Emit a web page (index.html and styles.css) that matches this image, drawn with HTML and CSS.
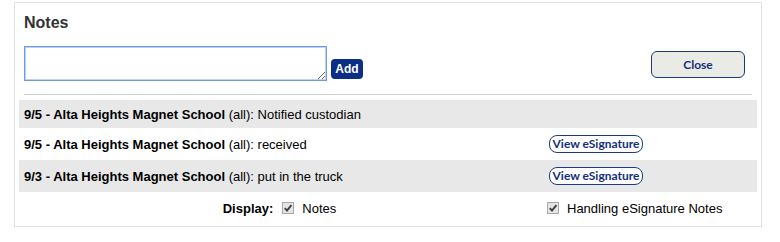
FILE: index.html
```html
<!DOCTYPE html>
<html>
	<head>
		<meta charset="UTF-8">
		<title>Notes</title>
		<link rel="stylesheet" href="styles.css">
	</head>
	<body>
		<div class="panel">
			<h2 class="title">Notes</h2>
			<div class="compose">
				<textarea class="noteInput"></textarea>
				<a href="#" class="addBtn">Add</a>
				<a href="#" class="closeBtn">Close</a>
			</div>
			<div class="rule"></div>
			<div class="notes">
				<div class="row odd">
					<div class="cell"><b>9/5 - Alta Heights Magnet School</b> (all):&nbsp;Notified custodian</div>
					<div class="cell"></div>
				</div>
				<div class="row tall">
					<div class="cell"><b>9/5 - Alta Heights Magnet School</b> (all): received</div>
					<div class="cell"><a href="#" class="sigBtn">View eSignature</a></div>
				</div>
				<div class="row odd tall">
					<div class="cell"><b>9/3 - Alta Heights Magnet School</b> (all): put in the truck</div>
					<div class="cell"><a href="#" class="sigBtn">View eSignature</a></div>
				</div>
				<div class="row display">
					<div class="cell left">
						<b>Display:</b>
						<span class="ck"><svg width="12" height="12" viewBox="0 0 12 12"><rect x="0.5" y="0.5" width="11" height="11" fill="#e4e4e4" stroke="#a9a9a9"/><path d="M2.8 6.2 L5 8.6 L9.4 3.2" fill="none" stroke="#3c3c3c" stroke-width="1.9"/></svg></span>
						<span>Notes</span>
					</div>
					<div class="cell right">
						<span class="ck"><svg width="12" height="12" viewBox="0 0 12 12"><rect x="0.5" y="0.5" width="11" height="11" fill="#e4e4e4" stroke="#a9a9a9"/><path d="M2.8 6.2 L5 8.6 L9.4 3.2" fill="none" stroke="#3c3c3c" stroke-width="1.9"/></svg></span>
						<span>Handling eSignature Notes</span>
					</div>
				</div>
			</div>
		</div>
	</body>
</html>
```

FILE: styles.css
```css
*{
	margin: 0;
	padding: 0;
	box-sizing: border-box;
}
body{
	background: #fff;
	font-family: Arial, "Liberation Sans", sans-serif;
	font-size: 13px;
	color: #000;
}
.panel{
	width: 748px;
	height: 225px;
	margin: 2px 0 0 14px;
	border: 1px solid #e2e2e2;
	padding: 0 4px;
}
.title{
	font-size: 16px;
	line-height: 18px;
	color: #333;
	margin: 11px 0 0 5px;
}
.compose{
	display: flex;
	align-items: flex-start;
	margin: 14px 12px 0 5px;
}
.noteInput{
	width: 303px;
	height: 35px;
	border: 1px solid #6f9ae0;
	box-shadow: 0 0 0 1px #bcd2f4 inset;
	outline: none;
	font-family: Arial, "Liberation Sans", sans-serif;
	font-size: 13px;
	padding: 2px;
}
.addBtn{
	display: inline-block;
	width: 32px;
	height: 20px;
	line-height: 20px;
	margin: 13px 0 0 4px;
	background: #0b2f86;
	border-radius: 4px;
	color: #fff;
	font-weight: bold;
	font-size: 12px;
	text-align: center;
	text-decoration: none;
}
.closeBtn{
	display: inline-block;
	width: 94px;
	height: 27px;
	line-height: 25px;
	margin: 5px 0 0 auto;
	background: #ebebe6;
	border: 1px solid #1b3b86;
	border-radius: 6px;
	color: #12307a;
	font-family: Lato, "Open Sans", sans-serif;
	font-weight: bold;
	font-size: 12px;
	text-align: center;
	text-decoration: none;
}
.rule{
	height: 1px;
	background: #cfcfcf;
	margin: 13px 5px 0 5px;
}
.notes{
	margin-top: 5px;
}
.row{
	display: grid;
	grid-template-columns: 530px 1fr;
	align-items: center;
	height: 28px;
}
.row.tall{
	height: 32px;
}
.row.odd{
	background: #e8e8e8;
}
.row .cell{
	padding-left: 5px;
	white-space: nowrap;
}
.row .cell:nth-child(2){
	padding-left: 0;
}
.sigBtn{
	display: inline-block;
	width: 94px;
	height: 18px;
	line-height: 16px;
	background: #fff;
	border: 1px solid #1b3b86;
	border-radius: 8px;
	color: #12307a;
	font-family: Lato, "Open Sans", sans-serif;
	font-weight: bold;
	font-size: 12px;
	text-align: center;
	text-decoration: none;
}
.row.display{
	height: 32px;
}
.display .cell{
	display: flex;
	align-items: center;
}
.display .left{
	justify-content: center;
	padding-right: 14px;
}
.display .right{
	padding-left: 0;
	margin-left: -2px;
}
.ck{
	display: inline-flex;
	margin: 0 8px 0 9px;
}
.display .right .ck{
	margin-left: 0;
	margin-right: 8px;
}
```
